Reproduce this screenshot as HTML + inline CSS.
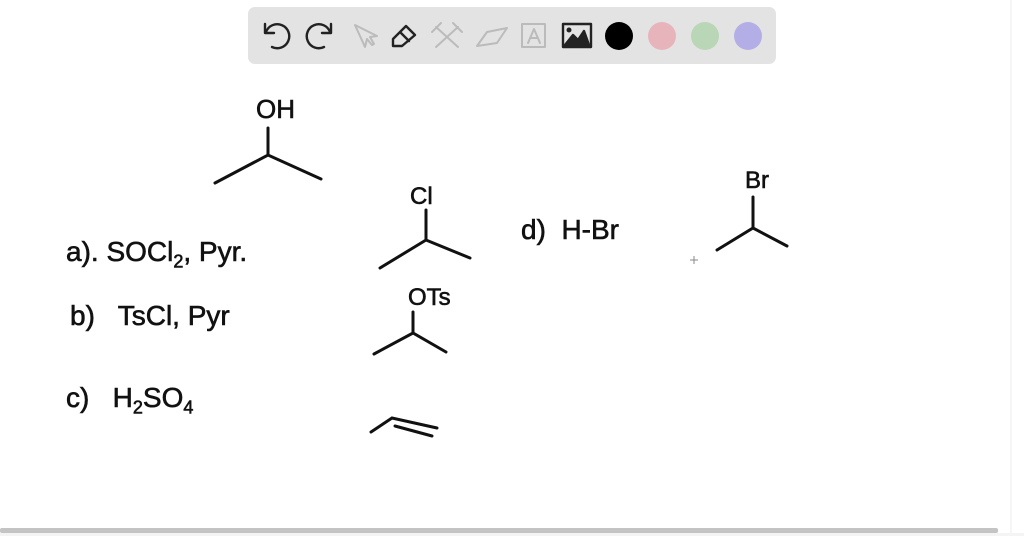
<!DOCTYPE html>
<html><head><meta charset="utf-8"><style>
html,body{margin:0;padding:0;background:#fff;width:1024px;height:536px;overflow:hidden;position:relative;font-family:"Liberation Sans",sans-serif}
.tb{position:absolute;left:248px;top:7px;width:528px;height:57px;background:#e3e3e3;border-radius:7px}
.dot{position:absolute;top:22px;width:28px;height:28px;border-radius:50%}
.hw{position:absolute;font-family:"Liberation Sans",sans-serif;color:#111;white-space:nowrap;-webkit-text-stroke:0.6px #111}
</style></head><body>
<div class="tb"></div>
<svg style="position:absolute;left:0;top:0" width="1024" height="536">
<g fill="none" stroke="#222" stroke-width="2.4" stroke-linecap="round" stroke-linejoin="round">
<path d="M265 24 L265 33 L274 33"/><path d="M266 32 A12 12 0 1 1 272 47"/>
<path d="M331 24 L331 33 L322 33"/><path d="M330 32 A12 12 0 1 0 324 47"/>
<path d="M393 46 L393 39 L406 26 L415 35 L402 46 Z M400 32 L409 41"/>
<rect x="563" y="24" width="28" height="23"/><path d="M565 45 L573 35 L578 40 L584 31 L589 45 Z" fill="#222"/>
</g>
<circle cx="569" cy="30" r="2.5" fill="#222"/>
<g fill="none" stroke="#bbb" stroke-width="2" stroke-linecap="round" stroke-linejoin="round">
<path d="M355 25 L365 47 L367 39 L372 45 L374 44 L370 37 L377 36 Z"/>
<path d="M436 27 L458 47 M458 27 L436 47 M432 32 L441 23 M453 23 L462 32"/>
<path d="M477 46 L487 32 L507 28 L497 43 Z"/>
<rect x="522" y="24" width="23" height="23"/><path d="M528 43 L534 29 L540 43 M530 38 L538 38"/>
</g>
<g fill="none" stroke="#111" stroke-width="3" stroke-linecap="round">
<path d="M268 128 L268 155 M215 183 L268 155 L321 179"/>
<path d="M426 210 L426 240 M380 268 L426 240 L470 258"/>
<path d="M413 312 L413 333 M374 354 L413 333 L446 352"/>
<path d="M371 432 L392 418 L437 428 M395 426 L432 436"/>
<path d="M753 197 L753 228 M717 250 L753 228 L787 246"/>
</g>
<path d="M694 256 L694 264 M690 260 L698 260" stroke="#888" stroke-width="1"/>
<line x1="1011" y1="0" x2="1011" y2="536" stroke="#eee" stroke-width="1"/>
<rect x="0" y="533" width="1024" height="3" fill="#f4f4f4"/>
<rect x="0" y="528" width="998" height="5" rx="2" fill="#c4c4c4"/>
</svg>
<div class="dot" style="left:605px;background:#000"></div>
<div class="dot" style="left:648px;background:#e8b4bb"></div>
<div class="dot" style="left:691px;background:#b9d6b6"></div>
<div class="dot" style="left:734px;background:#b3aee6"></div>
<div class="hw" style="left:256px;top:94px;font-size:26px">OH</div>
<div class="hw" style="left:410px;top:183px;font-size:24px">Cl</div>
<div class="hw" style="left:408px;top:284px;font-size:24px">OTs</div>
<div class="hw" style="left:745px;top:167px;font-size:24px">Br</div>
<div class="hw" style="left:66px;top:236px;font-size:28px">a). SOCl<sub style="font-size:18px">2</sub>, Pyr.</div>
<div class="hw" style="left:70px;top:300px;font-size:28px">b)&nbsp;&nbsp; TsCl, Pyr</div>
<div class="hw" style="left:66px;top:382px;font-size:28px">c)&nbsp;&nbsp; H<sub style="font-size:18px">2</sub>SO<sub style="font-size:18px">4</sub></div>
<div class="hw" style="left:521px;top:214px;font-size:28px">d)&nbsp; H-Br</div>
</body></html>
